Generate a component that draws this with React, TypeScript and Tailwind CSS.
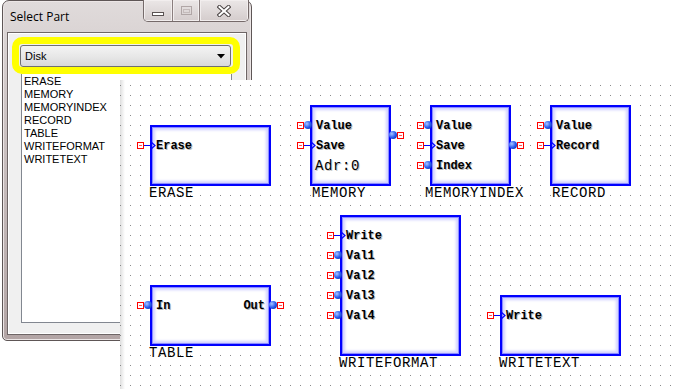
import React from "react";

type PortKind = "trig" | "data";
type Port = { side: "l" | "r"; y: number; kind: PortKind; text?: string };
type Node = {
  name: string;
  x: number;
  y: number;
  w: number;
  h: number;
  lx: number;
  ports: Port[];
  extra?: { text: string; y: number };
};

const CX = 120;
const CY = 80;

const nodes: Node[] = [
  { name: "ERASE", x: 150, y: 125, w: 121, h: 61, lx: 149, ports: [{ side: "l", y: 145, kind: "trig", text: "Erase" }] },
  {
    name: "MEMORY", x: 310, y: 105, w: 81, h: 81, lx: 312,
    ports: [
      { side: "l", y: 125, kind: "data", text: "Value" },
      { side: "l", y: 145, kind: "trig", text: "Save" },
      { side: "r", y: 135, kind: "data" },
    ],
    extra: { text: "Adr:0", y: 166 },
  },
  {
    name: "MEMORYINDEX", x: 430, y: 105, w: 81, h: 81, lx: 425,
    ports: [
      { side: "l", y: 125, kind: "data", text: "Value" },
      { side: "l", y: 145, kind: "trig", text: "Save" },
      { side: "l", y: 165, kind: "data", text: "Index" },
      { side: "r", y: 145, kind: "data" },
    ],
  },
  {
    name: "RECORD", x: 550, y: 105, w: 81, h: 81, lx: 552,
    ports: [
      { side: "l", y: 125, kind: "data", text: "Value" },
      { side: "l", y: 145, kind: "trig", text: "Record" },
    ],
  },
  {
    name: "TABLE", x: 150, y: 285, w: 121, h: 61, lx: 149,
    ports: [
      { side: "l", y: 305, kind: "data", text: "In" },
      { side: "r", y: 305, kind: "data", text: "Out" },
    ],
  },
  {
    name: "WRITEFORMAT", x: 340, y: 215, w: 121, h: 141, lx: 339,
    ports: [
      { side: "l", y: 235, kind: "trig", text: "Write" },
      { side: "l", y: 255, kind: "data", text: "Val1" },
      { side: "l", y: 275, kind: "data", text: "Val2" },
      { side: "l", y: 295, kind: "data", text: "Val3" },
      { side: "l", y: 315, kind: "data", text: "Val4" },
    ],
  },
  {
    name: "WRITETEXT", x: 500, y: 295, w: 121, h: 61, lx: 499,
    ports: [{ side: "l", y: 315, kind: "trig", text: "Write" }],
  },
];

function RedPin({ left, top }: { left: number; top: number }) {
  return (
    <div
      className="absolute w-[7px] h-[7px] border border-[#ff0000] bg-white"
      style={{ left, top }}
    >
      <div className="absolute left-[1px] top-[2px] w-[3px] h-[1px] bg-[#ff5050]" />
    </div>
  );
}

function Sphere({ left, top }: { left: number; top: number }) {
  return (
    <div
      className="absolute w-[8px] h-[8px] rounded-full bg-[radial-gradient(circle_at_35%_35%,#a8c4ff_0%,#2a5cf0_50%,#001a90_100%)]"
      style={{ left, top }}
    />
  );
}

function NodeView({ n }: { n: Node }) {
  const bx = n.x - CX;
  const by = n.y - CY;
  return (
    <>
      <div
        className="absolute border-2 border-[#0000ff] bg-white shadow-[inset_0_0_0_1px_#8c8cff,inset_0_0_3px_3px_#d0d0ff]"
        style={{ left: bx, top: by, width: n.w, height: n.h }}
      >
        {n.ports
          .filter((p) => p.text)
          .map((p, i) => (
            <div
              key={i}
              className={
                "absolute font-['Liberation_Mono',monospace] text-[12px] leading-[16px] font-bold text-black [text-shadow:1px_1px_0_#b8b8b8] " +
                (p.side === "l" ? "left-[4px]" : "right-[4px]")
              }
              style={{ top: p.y - n.y - 9 }}
            >
              {p.text}
            </div>
          ))}
        {n.extra && (
          <div
            className="absolute left-[3px] font-['Liberation_Mono',monospace] text-[14px] leading-[16px] tracking-[0.6px] text-black [text-shadow:1px_1px_0_#c8c8c8]"
            style={{ top: n.extra.y - n.y - 10 }}
          >
            {n.extra.text}
          </div>
        )}
      </div>
      {n.ports.map((p, i) => {
        const py = p.y - CY;
        if (p.side === "l") {
          if (p.kind === "trig") {
            return (
              <React.Fragment key={i}>
                <RedPin left={bx - 13} top={py - 3} />
                <div className="absolute h-[1px] w-[7px] bg-[#0000ff]" style={{ left: bx - 6, top: py }} />
                <svg className="absolute" width="7" height="10" style={{ left: bx, top: py - 4 }}>
                  <polyline points="0.5,0.5 5,4.5 0.5,8.5" fill="none" stroke="#0000ff" strokeWidth="1.2" />
                </svg>
              </React.Fragment>
            );
          }
          return (
            <React.Fragment key={i}>
              <RedPin left={bx - 13} top={py - 3} />
              <Sphere left={bx - 6} top={py - 4} />
            </React.Fragment>
          );
        }
        const rx = bx + n.w;
        return (
          <React.Fragment key={i}>
            <Sphere left={rx - 2} top={py - 4} />
            <RedPin left={rx + 6} top={py - 3} />
          </React.Fragment>
        );
      })}
      <div
        className="absolute font-['Liberation_Mono',monospace] text-[14px] leading-[16px] tracking-[0.6px] text-black whitespace-nowrap"
        style={{ left: n.lx - CX, top: n.y + n.h - 1 - CY }}
      >
        {n.name}
      </div>
    </>
  );
}

const items = ["ERASE", "MEMORY", "MEMORYINDEX", "RECORD", "TABLE", "WRITEFORMAT", "WRITETEXT"];

export default function App() {
  return (
    <div className="relative w-[680px] h-[389px] bg-white overflow-hidden">
      {/* Window */}
      <div className="ml-[2px] w-[250px] h-[341px] rounded-t-[7px] rounded-b-[5px] border border-[#5e5656] bg-[linear-gradient(to_bottom,#e0dbdb,#cfc6c6_30%,#b3a5a5)] flex flex-col shadow-[inset_0_0_0_1px_#ece6e6]">
        <div className="h-[31px] flex items-start shrink-0">
          <div className="pl-[7px] pt-[8px] font-['Open_Sans',sans-serif] text-[12px] leading-[16px] text-black">
            Select Part
          </div>
          <div className="ml-auto mr-[2px] -mt-px flex h-[22px] border border-t-0 border-[#756a6a] rounded-b-[5px] overflow-hidden bg-[linear-gradient(to_bottom,#ebe7e7,#d4cccc)]">
            <div className="w-[28px] flex items-center justify-center shadow-[inset_0_0_0_1px_#f2eeee]">
              <div className="w-[12px] h-[4px] bg-white border border-[#5a5252] mt-[6px]" />
            </div>
            <div className="w-[27px] border-l border-[#8a7e7e] flex items-center justify-center shadow-[inset_0_0_0_1px_#f2eeee]">
              <div className="w-[11px] h-[9px] border border-[#b0a6a6] flex items-center justify-center">
                <div className="w-[7px] h-[4px] border border-[#c4bbbb] mt-[1px]" />
              </div>
            </div>
            <div className="w-[49px] border-l border-[#8a7e7e] flex items-center justify-center shadow-[inset_0_0_0_1px_#f2eeee]">
              <svg width="14" height="12" viewBox="0 0 14 12">
                <path d="M2.5 2 L11.5 10 M11.5 2 L2.5 10" stroke="#4a4444" strokeWidth="4" strokeLinecap="square" />
                <path d="M2.5 2 L11.5 10 M11.5 2 L2.5 10" stroke="#ffffff" strokeWidth="2" strokeLinecap="square" />
              </svg>
            </div>
          </div>
        </div>
        <div className="mx-[4px] mb-[5px] flex-1 border border-[#6e6666] bg-[#f0f0f0] shadow-[inset_0_0_0_1px_#ffffff] flex flex-col">
          <div className="mt-[4px] ml-[4px] w-[228px] h-[37px] border-[7px] border-[#ffff00] rounded-[10px] pl-[1px] pt-[1px]">
            <div className="w-[211px] h-[22px] border border-[#707070] rounded-[3px] bg-[linear-gradient(to_bottom,#f4f4f4,#e8e8e8_50%,#d9d9d9)] flex items-center pl-[4px] pr-[5px] font-['Liberation_Sans',Arial,sans-serif] text-[11px] text-black">
              <span>Disk</span>
              <svg className="ml-auto" width="8" height="5" viewBox="0 0 8 5">
                <path d="M0 0 L8 0 L4 4.5 Z" fill="#000" />
              </svg>
            </div>
          </div>
          <div className="ml-[13px] w-[211px] h-[249px] border border-[#828790] border-t-0 bg-white pl-[2px] pt-[1px] font-['Liberation_Sans',Arial,sans-serif] text-[11px] leading-[13px] text-black">
            {items.map((t) => (
              <div key={t}>{t}</div>
            ))}
          </div>
        </div>
      </div>

      {/* Canvas */}
      <div className="absolute left-[120px] top-[80px] w-[560px] h-[309px] bg-white overflow-hidden">
        <div className="absolute left-0 top-0 bottom-0 w-[5px] bg-[linear-gradient(to_right,#dedede,#ffffff)]" />
        <svg className="absolute left-0 top-0" width="560" height="309">
          <defs>
            <pattern id="dots" x="0" y="0" width="10" height="10" patternUnits="userSpaceOnUse">
              <rect x="0" y="5" width="1" height="1" fill="#8a8a8a" />
            </pattern>
          </defs>
          <rect width="560" height="309" fill="url(#dots)" />
        </svg>
        {nodes.map((n) => (
          <NodeView key={n.name} n={n} />
        ))}
      </div>
    </div>
  );
}
